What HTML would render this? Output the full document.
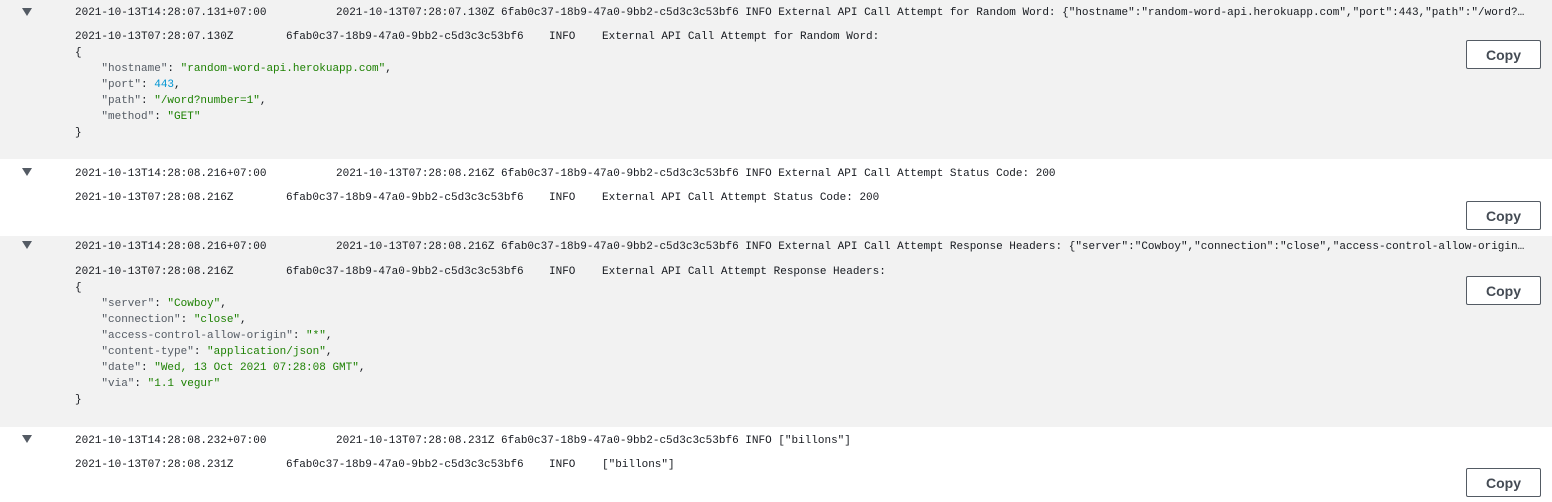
<!DOCTYPE html>
<html><head><meta charset="utf-8"><style>
body{margin:0;width:1552px;height:502px;overflow:hidden;background:#fff;font-family:"Liberation Mono",monospace;font-size:11px;color:#16191f;position:relative}
.bg{position:absolute;left:0;width:1552px;background:#f2f2f2}
.t{position:absolute;white-space:pre;line-height:16px;margin-top:1px}
.h{overflow:hidden;text-overflow:ellipsis;width:1194px}
.k{color:#545b64}.s{color:#1d8102}.n{color:#0095d3}
.tri{position:absolute;left:22px;width:0;height:0;border-left:5px solid transparent;border-right:5px solid transparent;border-top:8px solid #545b64}
.btn{position:absolute;left:1466px;width:73px;height:27px;border:1px solid #545b64;border-radius:2px;background:#fff;font-family:"Liberation Sans",sans-serif;font-weight:bold;font-size:14px;color:#444b54;text-align:center;line-height:28px}
</style></head><body>
<div class="bg" style="top:0;height:159px"></div>
<div class="bg" style="top:236px;height:191px"></div>

<div class="tri" style="top:8px"></div>
<div class="t" style="left:75px;top:4px">2021-10-13T14:28:07.131+07:00</div>
<div class="t h" style="left:336px;top:4px">2021-10-13T07:28:07.130Z 6fab0c37-18b9-47a0-9bb2-c5d3c3c53bf6 INFO External API Call Attempt for Random Word: {"hostname":"random-word-api.herokuapp.com","port":443,"path":"/word?number=1","method":"GET"}</div>
<div class="t" style="left:75px;top:28px">2021-10-13T07:28:07.130Z</div>
<div class="t" style="left:286px;top:28px">6fab0c37-18b9-47a0-9bb2-c5d3c3c53bf6</div>
<div class="t" style="left:549px;top:28px">INFO</div>
<div class="t" style="left:602px;top:28px">External API Call Attempt for Random Word:</div>
<div class="t" style="left:75px;top:44px">{
    <span class="k">"hostname"</span>: <span class="s">"random-word-api.herokuapp.com"</span>,
    <span class="k">"port"</span>: <span class="n">443</span>,
    <span class="k">"path"</span>: <span class="s">"/word?number=1"</span>,
    <span class="k">"method"</span>: <span class="s">"GET"</span>
}</div>
<div class="btn" style="top:40px">Copy</div>

<div class="tri" style="top:168px"></div>
<div class="t" style="left:75px;top:165px">2021-10-13T14:28:08.216+07:00</div>
<div class="t h" style="left:336px;top:165px">2021-10-13T07:28:08.216Z 6fab0c37-18b9-47a0-9bb2-c5d3c3c53bf6 INFO External API Call Attempt Status Code: 200</div>
<div class="t" style="left:75px;top:189px">2021-10-13T07:28:08.216Z</div>
<div class="t" style="left:286px;top:189px">6fab0c37-18b9-47a0-9bb2-c5d3c3c53bf6</div>
<div class="t" style="left:549px;top:189px">INFO</div>
<div class="t" style="left:602px;top:189px">External API Call Attempt Status Code: 200</div>
<div class="btn" style="top:201px">Copy</div>

<div class="tri" style="top:241px"></div>
<div class="t" style="left:75px;top:238px">2021-10-13T14:28:08.216+07:00</div>
<div class="t h" style="left:336px;top:238px">2021-10-13T07:28:08.216Z 6fab0c37-18b9-47a0-9bb2-c5d3c3c53bf6 INFO External API Call Attempt Response Headers: {"server":"Cowboy","connection":"close","access-control-allow-origin":"*","content-type":"application/json"}</div>
<div class="t" style="left:75px;top:263px">2021-10-13T07:28:08.216Z</div>
<div class="t" style="left:286px;top:263px">6fab0c37-18b9-47a0-9bb2-c5d3c3c53bf6</div>
<div class="t" style="left:549px;top:263px">INFO</div>
<div class="t" style="left:602px;top:263px">External API Call Attempt Response Headers:</div>
<div class="t" style="left:75px;top:279px">{
    <span class="k">"server"</span>: <span class="s">"Cowboy"</span>,
    <span class="k">"connection"</span>: <span class="s">"close"</span>,
    <span class="k">"access-control-allow-origin"</span>: <span class="s">"*"</span>,
    <span class="k">"content-type"</span>: <span class="s">"application/json"</span>,
    <span class="k">"date"</span>: <span class="s">"Wed, 13 Oct 2021 07:28:08 GMT"</span>,
    <span class="k">"via"</span>: <span class="s">"1.1 vegur"</span>
}</div>
<div class="btn" style="top:276px">Copy</div>

<div class="tri" style="top:435px"></div>
<div class="t" style="left:75px;top:432px">2021-10-13T14:28:08.232+07:00</div>
<div class="t h" style="left:336px;top:432px">2021-10-13T07:28:08.231Z 6fab0c37-18b9-47a0-9bb2-c5d3c3c53bf6 INFO ["billons"]</div>
<div class="t" style="left:75px;top:456px">2021-10-13T07:28:08.231Z</div>
<div class="t" style="left:286px;top:456px">6fab0c37-18b9-47a0-9bb2-c5d3c3c53bf6</div>
<div class="t" style="left:549px;top:456px">INFO</div>
<div class="t" style="left:602px;top:456px">["billons"]</div>
<div class="btn" style="top:468px">Copy</div>
</body></html>
